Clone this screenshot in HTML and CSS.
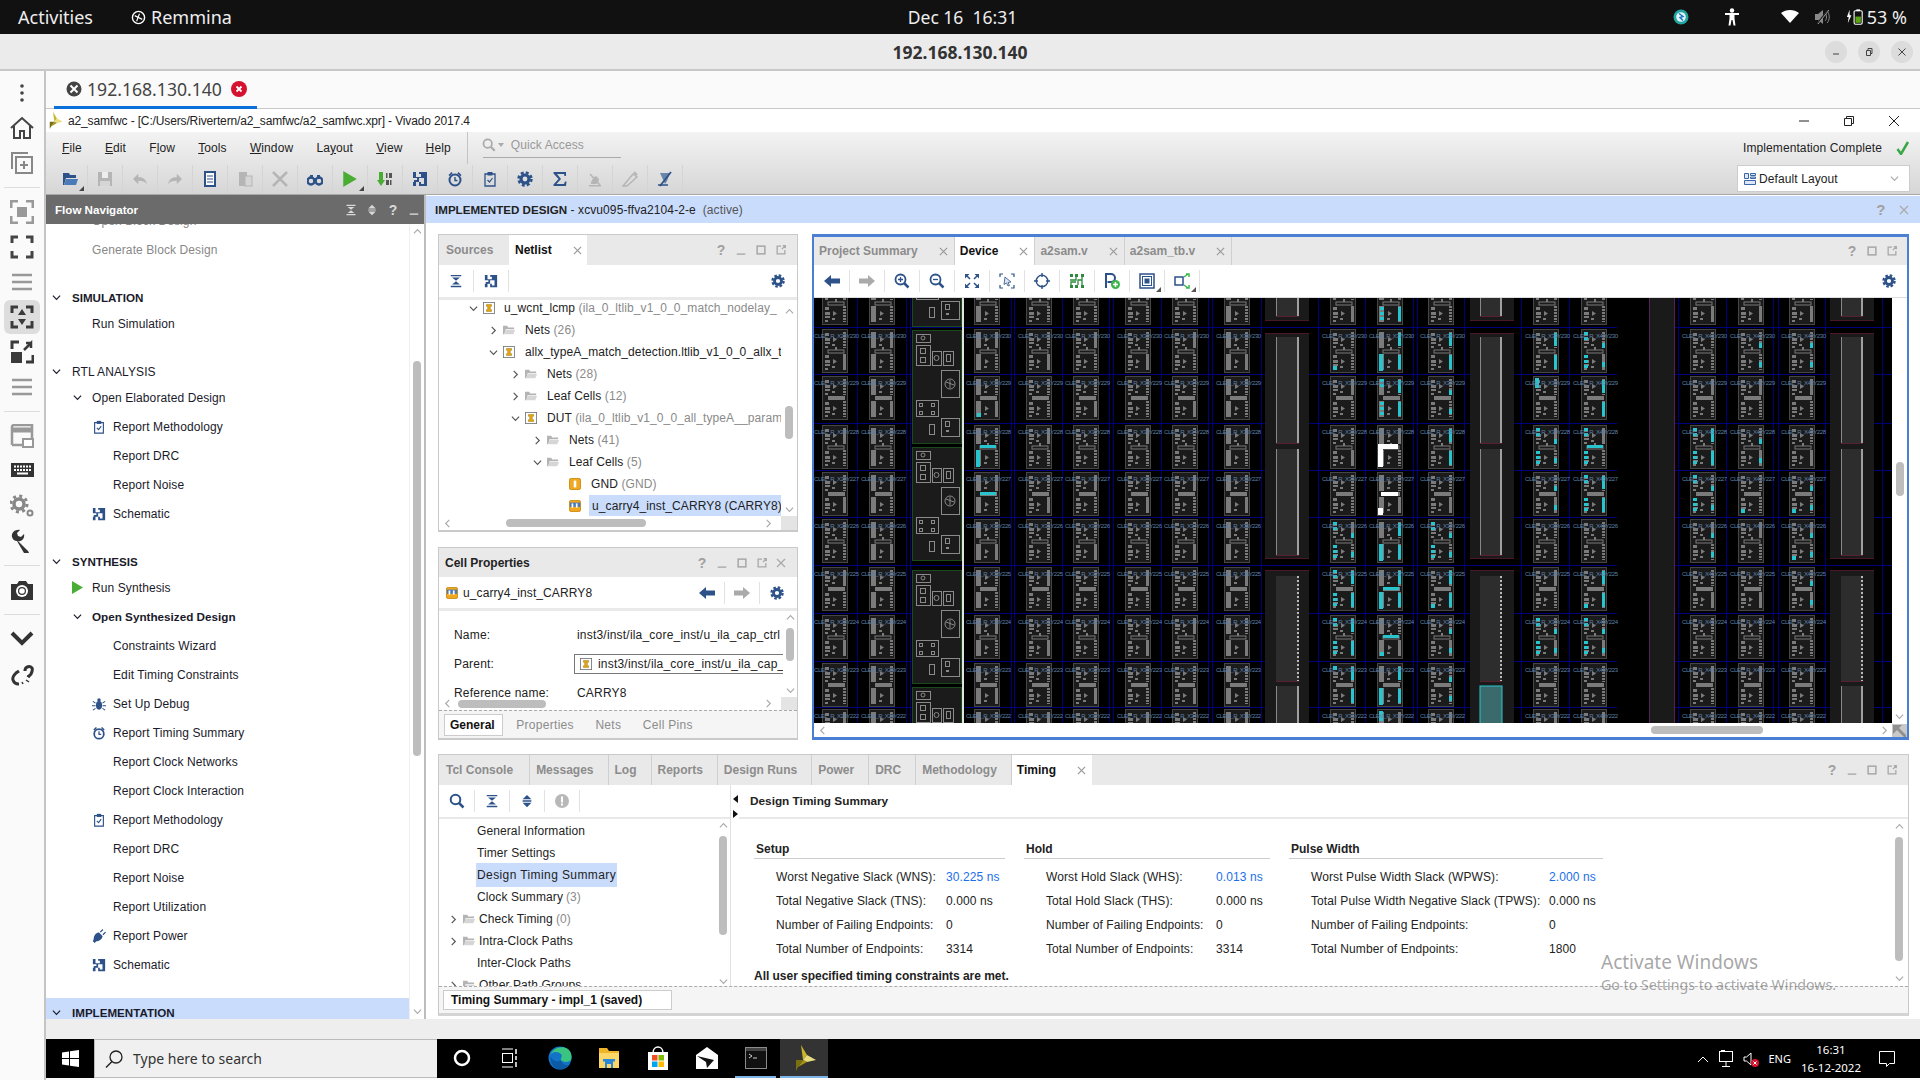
FILE: index.html
```html
<!DOCTYPE html>
<html lang="en">
<head>
<meta charset="utf-8">
<title>192.168.130.140 - Vivado</title>
<link rel="stylesheet" href="styles.css">
</head>
<body>
<svg class="sprite" aria-hidden="true">
  <defs>
    <symbol id="chev-d" viewBox="0 0 10 10"><path d="M1 3l4 4 4-4" fill="none" stroke="currentColor" stroke-width="1.3"/></symbol>
    <symbol id="chev-r" viewBox="0 0 10 10"><path d="M3 1l4 4-4 4" fill="none" stroke="currentColor" stroke-width="1.3"/></symbol>
    <symbol id="chev-u" viewBox="0 0 10 10"><path d="M1 7l4-4 4 4" fill="none" stroke="currentColor" stroke-width="1.3"/></symbol>
    <symbol id="chev-l" viewBox="0 0 10 10"><path d="M7 1L3 5l4 4" fill="none" stroke="currentColor" stroke-width="1.3"/></symbol>
    <symbol id="x" viewBox="0 0 10 10"><path d="M1 1l8 8M9 1l-8 8" fill="none" stroke="currentColor" stroke-width="1.3"/></symbol>
    <symbol id="min" viewBox="0 0 14 14"><rect x="2" y="11" width="10" height="1.6" fill="currentColor"/></symbol>
    <symbol id="max" viewBox="0 0 14 14"><rect x="2.5" y="2.5" width="9" height="9" fill="none" stroke="currentColor" stroke-width="1.8"/></symbol>
    <symbol id="float" viewBox="0 0 14 14"><path d="M7 2.5H2.5v9h9V7M8 6l4-4M9 2h3v3" fill="none" stroke="currentColor" stroke-width="1.5"/></symbol>
    <symbol id="collapse" viewBox="0 0 16 16"><path d="M2 1h12v1.6H2zM2 13.4h12V15H2zM3.5 4h9L8 7.6zM3.5 12h9L8 8.4z" fill="currentColor"/></symbol>
    <symbol id="updown" viewBox="0 0 16 16"><path d="M8 1l5 5H3zM8 15l-5-5h10zM3 7.2h10v1.6H3z" fill="currentColor"/></symbol>
    <symbol id="schem" viewBox="0 0 16 16"><path d="M1 1h3v5h5V3h-2V1h8v14H7v-4h2v2h3V7H7v4H4v4H1v-4h1V9h3V7H1z" fill="currentColor"/></symbol>
    <symbol id="gear" viewBox="0 0 16 16"><circle cx="8" cy="8" r="4" fill="none" stroke="currentColor" stroke-width="3.2"/><circle cx="8" cy="8" r="6.4" fill="none" stroke="currentColor" stroke-width="2.6" stroke-dasharray="2.9 2.13"/></symbol>
    <symbol id="arrow-l" viewBox="0 0 16 12"><path d="M7 0v3.5h9v5H7V12L0 6z" fill="currentColor"/></symbol>
    <symbol id="arrow-r" viewBox="0 0 16 12"><path d="M9 0v3.5H0v5h9V12l7-6z" fill="currentColor"/></symbol>
    <symbol id="folder" viewBox="0 0 14 12"><path d="M0 1h5l1 2h7v2H3L1.500 11H0z" fill="#b4b4b4"/><path d="M3 6h11l-2 5H1.500z" fill="#d6d6d6"/></symbol>
    <symbol id="cell" viewBox="0 0 14 14"><rect x=".5" y=".5" width="13" height="13" fill="#fff" stroke="#777"/><path d="M4 3h6v2H8.500v4H10v2H4V9h1.500V5H4z" fill="#e8a90c" stroke="#8a6400" stroke-width=".5"/></symbol>
    <symbol id="leaf" viewBox="0 0 14 14"><rect x=".5" y=".5" width="13" height="13" rx="2" fill="#f0a820" stroke="#c98400"/><rect x="5.500" y="3" width="3" height="8" fill="#fff"/></symbol>
    <symbol id="leaf2" viewBox="0 0 14 14"><rect x=".5" y=".5" width="13" height="13" rx="2" fill="#f0a820" stroke="#c98400"/><rect x="1" y="3" width="12" height="5" fill="#4a78b8"/><rect x="3" y="4" width="2" height="5" fill="#fff"/><rect x="8" y="4" width="2" height="5" fill="#fff"/></symbol>
    <symbol id="clip" viewBox="0 0 16 16"><path d="M3 3h10v12H3z" fill="none" stroke="currentColor" stroke-width="1.300"/><rect x="5.500" y="1" width="5" height="3.500" fill="currentColor"/><path d="M5.500 9l2 2 3-4" fill="none" stroke="currentColor" stroke-width="1.200"/></symbol>
    <symbol id="clock" viewBox="0 0 16 16"><circle cx="8" cy="9" r="5.500" fill="none" stroke="currentColor" stroke-width="2"/><path d="M8 6v3.500h2.500" fill="none" stroke="currentColor" stroke-width="1.400"/><path d="M1.500 4l3-3 1.200 1.200-3 3zM14.500 4l-3-3-1.200 1.200 3 3z" fill="currentColor"/></symbol>
    <symbol id="bug" viewBox="0 0 16 16"><ellipse cx="8" cy="9.500" rx="3.500" ry="5" fill="currentColor"/><circle cx="8" cy="3.500" r="2" fill="currentColor"/><path d="M1 5l3 2M15 5l-3 2M0 10h4M16 10h-4M1 15l3-2M15 15l-3-2" stroke="currentColor" stroke-width="1.200"/></symbol>
    <symbol id="plug" viewBox="0 0 16 16"><path d="M2 11c0-4 3-7 6-7l4 4c0 3-3 6-7 6l-2 2-2-2z" fill="currentColor"/><path d="M9 3l3-3 1 1-3 3zM12 6l3-3 1 1-3 3z" fill="currentColor"/></symbol>
    <symbol id="play" viewBox="0 0 12 14"><path d="M0 0l12 7-12 7z" fill="#4aad33"/></symbol>
    <symbol id="search" viewBox="0 0 16 16"><circle cx="6.500" cy="6.500" r="4.800" fill="none" stroke="currentColor" stroke-width="2"/><path d="M10 10l4.500 4.500" stroke="currentColor" stroke-width="2.500"/></symbol>
    <symbol id="vivado" viewBox="0 0 24 26"><path d="M9 0l6 10-4 5z" fill="#c9b62c"/><path d="M15 10l9 5-9 2-4-2z" fill="#e8de80"/><path d="M11 15l4 2-9 5z" fill="#a39413"/><path d="M11 15L6 22l-2 4V15z" fill="#7a7010"/></symbol>
  </defs>
</svg>

<header class="topbar">
  <div class="top-left">
    <span>Activities</span>
    <span class="rem"><svg class="i15" viewBox="0 0 16 16"><circle cx="8" cy="8" r="6.500" fill="none" stroke="#fff" stroke-width="1.500"/><path d="M4 6l8 4M9 4l-3 8" stroke="#fff" stroke-width="1.200"/></svg>Remmina</span>
  </div>
  <div class="top-clock">Dec 16&nbsp; 16:31</div>
  <div class="top-right">
    <svg class="i16 t-s" viewBox="0 0 16 16"><circle cx="8" cy="8" r="7.500" fill="#22a5a0"/><circle cx="8" cy="8" r="4.800" fill="#e8f4fa"/><path d="M6 4.500l4 3-3 1 3 3" fill="none" stroke="#1a78c8" stroke-width="1.500"/></svg>
    <svg class="i18 t-a" viewBox="0 0 18 18"><circle cx="9" cy="2.500" r="2.200" fill="#fff"/><path d="M2 5h14v2h-4.500v3.500l1 7h-2L9.500 12h-1l-1 5.500h-2l1-7V7H2z" fill="#fff"/></svg>
    <svg class="i18 t-w" viewBox="0 0 18 18"><path d="M9 15L0 5c5-4 13-4 18 0z" fill="#fff"/></svg>
    <svg class="i18 t-m" viewBox="0 0 18 18"><path d="M1 6h3l5-4v14l-5-4H1z" fill="#888"/><path d="M11 5c2 2 2 6 0 8M13 3c3 3 3 9 0 12" fill="none" stroke="#888"/><path d="M3 16L14 2" stroke="#222" stroke-width="1.500"/><path d="M4 16L15 2" stroke="#999"/></svg>
    <svg class="i18 t-b" viewBox="0 0 20 18"><path d="M4 1L1 9h2l-1 7 4-9H4z" fill="#fff"/><rect x="9" y="2" width="9" height="15" rx="1.500" fill="none" stroke="#fff" stroke-width="1.200"/><rect x="11.500" y=".5" width="4" height="2" fill="#fff"/><rect x="10.500" y="8.500" width="6" height="7" fill="#5aa510"/></svg>
    <span>53 %</span>
  </div>
</header>

<div class="titlebar">
  <span class="tb-title">192.168.130.140</span>
  <div class="tb-btns">
    <span class="wbtn"><svg class="i10" viewBox="0 0 10 10"><path d="M2 7h6" stroke="#444"/></svg></span>
    <span class="wbtn"><svg class="i10" viewBox="0 0 10 10"><path d="M2.500 3.500h4v5h-4zM4 3.500V1.500h4v5H6.500" fill="none" stroke="#444"/></svg></span>
    <span class="wbtn"><svg class="i10" viewBox="0 0 10 10"><path d="M1.500 1.500l7 7M8.500 1.500l-7 7" stroke="#444"/></svg></span>
  </div>
</div>

<div class="shell">
  <aside class="dock">
    <svg class="dk" viewBox="0 0 24 24"><circle cx="12" cy="5" r="1.800" fill="#444"/><circle cx="12" cy="12" r="1.800" fill="#444"/><circle cx="12" cy="19" r="1.800" fill="#444"/></svg>
    <svg class="dk" viewBox="0 0 24 24"><path d="M1 12L12 2l11 10M4 10v12h6v-7h4v7h6V10" fill="none" stroke="#444" stroke-width="2"/></svg>
    <svg class="dk" viewBox="0 0 24 24"><path d="M2 18V2h16" fill="none" stroke="#888" stroke-width="2"/><rect x="6" y="6" width="16" height="16" fill="none" stroke="#888" stroke-width="2"/><path d="M14 10v8M10 14h8" stroke="#888" stroke-width="2"/></svg>
    <div class="dk-sep"></div>
    <svg class="dk" viewBox="0 0 24 24"><path d="M8 1H1v7M16 1h7v7M8 23H1v-7M16 23h7v-7" fill="none" stroke="#999" stroke-width="3"/><rect x="7" y="7" width="10" height="10" fill="#999"/></svg>
    <svg class="dk" viewBox="0 0 24 24"><path d="M8 2H2v6M16 2h6v6M8 22H2v-6M16 22h6v-6" fill="none" stroke="#444" stroke-width="3"/></svg>
    <svg class="dk" viewBox="0 0 24 24"><path d="M2 5h20M2 12h20M2 19h20" stroke="#999" stroke-width="2.500"/></svg>
    <span class="dk-on"><svg class="dk" viewBox="0 0 24 24"><path d="M8 2H2v6M16 2h6v6M8 22H2v-6M16 22h6v-6" fill="none" stroke="#3a3a3a" stroke-width="3"/><path d="M12 4l4 6H8zM12 20l-4-6h8z" fill="#3a3a3a"/></svg></span>
    <svg class="dk" viewBox="0 0 24 24"><path d="M2 9V2h7M16 22h7v-7" fill="none" stroke="#3a3a3a" stroke-width="3"/><rect x="1" y="12" width="11" height="11" fill="#3a3a3a"/><path d="M14 10l7-7v5M21 3h-5" fill="none" stroke="#3a3a3a" stroke-width="2.500"/></svg>
    <svg class="dk" viewBox="0 0 24 24"><path d="M2 5h20M2 12h20M2 19h20" stroke="#999" stroke-width="2.500"/></svg>
    <div class="dk-sep"></div>
    <svg class="dk" viewBox="0 0 24 24"><path d="M2 21V3c0-1 1-2 2-2h18v14" fill="none" stroke="#999" stroke-width="2.500"/><path d="M2 6h20" stroke="#999" stroke-width="5"/><rect x="13" y="15" width="10" height="8" fill="#fff" stroke="#999" stroke-width="2"/><path d="M2 21h10" stroke="#999" stroke-width="2.500"/></svg>
    <svg class="dk" viewBox="0 0 24 24"><rect x="1" y="4" width="23" height="14" fill="#333"/><path d="M4 7.500h17M4 11h17" stroke="#fff" stroke-width="2" stroke-dasharray="2 1"/><path d="M7 14.500h11" stroke="#fff" stroke-width="2"/></svg>
    <svg class="dk" viewBox="0 0 24 24"><circle cx="9" cy="10" r="5" fill="none" stroke="#888" stroke-width="3.500"/><circle cx="9" cy="10" r="8" fill="none" stroke="#888" stroke-width="3" stroke-dasharray="3 3.280"/><circle cx="20" cy="19" r="2.500" fill="none" stroke="#888" stroke-width="2"/></svg>
    <svg class="dk" viewBox="0 0 24 24"><path d="M2 8c-1-4 3-8 8-7L7 4l1 3 3 1 3-3c1 4-2 8-6 7l9 9c1 1 3 3 1 4s-3 0-4-1L7 12C5 12 3 11 2 8z" fill="#333"/></svg>
    <div class="dk-sep"></div>
    <svg class="dk" viewBox="0 0 24 24"><path d="M1 6h6l2-3h7l2 3h5v16H1z" fill="#333"/><circle cx="12" cy="13" r="6" fill="#fff"/><circle cx="12" cy="13" r="4" fill="#333"/><circle cx="12" cy="13" r="2.800" fill="#fff"/></svg>
    <div class="dk-sep"></div>
    <svg class="dk" viewBox="0 0 24 24"><path d="M2 6l10 10L22 6" fill="none" stroke="#333" stroke-width="4"/></svg>
    <svg class="dk" viewBox="0 0 24 24"><path d="M9 22a6 6 0 0 1-6-4c-1-3 1-5 3-7l3-2M15 9V8a4 4 0 0 1 7-2c1 2 0 4-1 6l-3 3" fill="none" stroke="#333" stroke-width="3"/><path d="M12 20l1 2M16 18l3 2M17 14l3 1" stroke="#333" stroke-width="1.500"/></svg>
  </aside>

  <div class="stage">
    <div class="rtabs">
      <div class="rtab">
        <svg class="i14 rt-ic" viewBox="0 0 16 16"><circle cx="8" cy="8" r="7.500" fill="#444"/><path d="M4.500 4.500l7 7M11.500 4.500l-7 7" stroke="#fff" stroke-width="2"/></svg>
        <span>192.168.130.140</span>
        <svg class="i16 rt-x" viewBox="0 0 16 16"><circle cx="8" cy="8" r="8" fill="#d5122f"/><path d="M5.500 5.500l5 5M10.500 5.500l-5 5" stroke="#fff" stroke-width="1.800"/></svg>
      </div>
    </div>

    <div class="vtitle">
      <svg class="vlogo" viewBox="0 0 24 26"><use href="#vivado"/></svg>
      <span class="vtitle-t">a2_samfwc - [C:/Users/Rivertern/a2_samfwc/a2_samfwc.xpr] - Vivado 2017.4</span>
      <div class="vtitle-btns">
        <svg class="i12" viewBox="0 0 12 12"><path d="M1 6h10" stroke="#222"/></svg>
        <svg class="i12" viewBox="0 0 12 12"><path d="M1.500 3.500h7v7h-7zM3.500 3.500v-2h7v7h-2" fill="none" stroke="#222"/></svg>
        <svg class="i12" viewBox="0 0 12 12"><path d="M1 1l10 10M11 1L1 11" stroke="#222"/></svg>
      </div>
    </div>

    <div class="menubar">
      <div class="menu-left">
        <div class="menu-row">
          <nav class="menu-items">
            <span><u>F</u>ile</span><span><u>E</u>dit</span><span>F<u>l</u>ow</span><span><u>T</u>ools</span><span><u>W</u>indow</span><span>La<u>y</u>out</span><span><u>V</u>iew</span><span><u>H</u>elp</span>
          </nav>
          <div class="quick">
            <svg class="i14" viewBox="0 0 16 16"><use href="#search"/></svg><span class="qa-caret"></span><span>Quick Access</span>
          </div>
        </div>
        <div class="tools">
          <span class="tb drop"><svg class="i16 blue" viewBox="0 0 16 16"><path d="M1 2h6l1 2h6v3H4L2 14H1z" fill="#2d5289"/><path d="M4 8h12l-2 6H2z" fill="#4a7ab8"/></svg></span>
          <span class="tb"><svg class="i16" viewBox="0 0 16 16"><path d="M1 1h14v14H1z" fill="#b5b5b5"/><rect x="5" y="1" width="6" height="6" fill="#eee"/><rect x="3" y="10" width="10" height="5" fill="#d5d5d5"/></svg></span>
          <span class="tb"><svg class="i14" viewBox="0 0 16 12"><path d="M6 0v4c5 0 9 2 10 8-2-3-5-4-10-4v4L0 6z" fill="#b5b5b5"/></svg></span>
          <span class="tb"><svg class="i14" viewBox="0 0 16 12"><path d="M10 0v4C5 4 1 6 0 12c2-3 5-4 10-4v4l6-6z" fill="#b5b5b5"/></svg></span>
          <span class="tb"><svg class="i16" viewBox="0 0 16 16"><path d="M3 1h10v14H3z" fill="#fff" stroke="#2d5289" stroke-width="2"/><path d="M5 5h6M5 8h6M5 11h6" stroke="#2d5289" stroke-width="1.200"/></svg></span>
          <span class="tb"><svg class="i16" viewBox="0 0 16 16"><rect x="2" y="1" width="8" height="14" fill="#b5b5b5"/><rect x="8" y="5" width="7" height="10" fill="#d5d5d5" stroke="#b5b5b5"/></svg></span>
          <span class="tb"><svg class="i16" viewBox="0 0 16 16"><path d="M1 1l14 14M15 1L1 15" stroke="#b5b5b5" stroke-width="2.500"/></svg></span>
          <span class="tb"><svg class="i16" viewBox="0 0 16 16"><circle cx="4" cy="10" r="3.500" fill="none" stroke="#2d5289" stroke-width="2.500"/><circle cx="12" cy="10" r="3.500" fill="none" stroke="#2d5289" stroke-width="2.500"/><path d="M3 4h3v4H3zM10 4h3v4h-3zM6 7h4v3H6z" fill="#2d5289"/></svg></span>
          <span class="tb drop"><svg class="i16" viewBox="0 0 12 14"><use href="#play"/></svg></span>
          <span class="tb"><svg class="i16" viewBox="0 0 16 16"><path d="M2 1h4v8h2l-4 6-4-6h2z" fill="#4aad33"/><path d="M9 2h1.500v5H9zM12 2h3v5h-3zM9 9h3v5H9zM13 9h1.500v5H13z" fill="#555"/></svg></span>
          <span class="tb"><svg class="i16 blue" viewBox="0 0 16 16"><use href="#schem"/></svg></span>
          <span class="tb"><svg class="i16 blue" viewBox="0 0 16 16"><use href="#clock"/></svg></span>
          <span class="tb"><svg class="i16 blue" viewBox="0 0 16 16"><use href="#clip"/></svg></span>
          <span class="tb"><svg class="i16 blue" viewBox="0 0 16 16"><use href="#gear"/></svg></span>
          <span class="tb"><svg class="i16 blue" viewBox="0 0 16 16"><path d="M1.500 1h12.500v4h-1.500l-.5-2H5l4 5-4.500 5H12l1-2.500h1.500L14 15H1.500v-1.500L6.500 8 1.500 2.500z" fill="currentColor"/></svg></span>
          <span class="tb"><svg class="i16" viewBox="0 0 16 16"><path d="M2 14h12v1.500H2zM4 13c0-4 3-7 5-8l3 3c0 3-2 5-3 5z" fill="#b5b5b5"/><path d="M3 3l10 11" stroke="#b5b5b5" stroke-width="1.500"/></svg></span>
          <span class="tb"><svg class="i16" viewBox="0 0 16 16"><path d="M1 15L11 3l4 3L5 15z" fill="none" stroke="#b5b5b5" stroke-width="1.500"/><path d="M12 1l3 3" stroke="#b5b5b5" stroke-width="2"/></svg></span>
          <span class="tb"><svg class="i16" viewBox="0 0 16 16"><path d="M3 2l5 11 2-3 3-8" fill="#6a85aa"/><path d="M14 1L3 15" stroke="#2d5289" stroke-width="1.800"/><path d="M1 14h10" stroke="#2d5289" stroke-width="1.500"/></svg></span>
        </div>
      </div>
      <div class="menu-right">
        <div class="status"><span>Implementation Complete</span><svg class="i14" viewBox="0 0 14 14"><path d="M1.500 8l3.500 5 7-12" fill="none" stroke="#3aa845" stroke-width="2.500"/></svg></div>
        <div class="layout-sel">
          <svg class="i12" viewBox="0 0 12 12"><path d="M.5.500h4v5h-4zM6.500.500h5v2h-5zM6.500 4h5v1.500h-5zM.5 7.500h11v4H.500z" fill="#dde7f5" stroke="#3a66a8"/></svg>
          <span class="ls-t">Default Layout</span>
          <svg class="i9 grey" viewBox="0 0 10 10"><use href="#chev-d"/></svg>
        </div>
      </div>
    </div>

    <div class="workspace">
      <section class="flow">
        <div class="flow-head">
          <span>Flow Navigator</span>
          <div class="flow-btns">
            <svg class="i12" viewBox="0 0 16 16"><use href="#collapse"/></svg>
            <svg class="i12" viewBox="0 0 16 16"><use href="#updown"/></svg>
            <span class="q">?</span>
            <svg class="i12" viewBox="0 0 14 14"><use href="#min"/></svg>
          </div>
        </div>
        <div class="flow-body">
          <div class="flow-list">
            <div class="fi lv1 dim">Open Block Design</div>
            <div class="fi lv1 dim">Generate Block Design</div>
            <div class="fh"><svg class="i9" viewBox="0 0 10 10"><use href="#chev-d"/></svg><b>SIMULATION</b></div>
            <div class="fi lv1">Run Simulation</div>
            <div class="fh"><svg class="i9" viewBox="0 0 10 10"><use href="#chev-d"/></svg><span class="reg">RTL ANALYSIS</span></div>
            <div class="fi lv1 tw"><svg class="i9" viewBox="0 0 10 10"><use href="#chev-d"/></svg>Open Elaborated Design</div>
            <div class="fi lv2"><svg class="i14 blue" viewBox="0 0 16 16"><use href="#clip"/></svg>Report Methodology</div>
            <div class="fi lv2">Report DRC</div>
            <div class="fi lv2">Report Noise</div>
            <div class="fi lv2"><svg class="i14 blue" viewBox="0 0 16 16"><use href="#schem"/></svg>Schematic</div>
            <div class="fh"><svg class="i9" viewBox="0 0 10 10"><use href="#chev-d"/></svg><b>SYNTHESIS</b></div>
            <div class="fi lv1 run"><svg class="i12" viewBox="0 0 12 14"><use href="#play"/></svg>Run Synthesis</div>
            <div class="fi lv1 tw"><svg class="i9" viewBox="0 0 10 10"><use href="#chev-d"/></svg><b>Open Synthesized Design</b></div>
            <div class="fi lv2">Constraints Wizard</div>
            <div class="fi lv2">Edit Timing Constraints</div>
            <div class="fi lv2"><svg class="i14 blue" viewBox="0 0 16 16"><use href="#bug"/></svg>Set Up Debug</div>
            <div class="fi lv2"><svg class="i14 blue" viewBox="0 0 16 16"><use href="#clock"/></svg>Report Timing Summary</div>
            <div class="fi lv2">Report Clock Networks</div>
            <div class="fi lv2">Report Clock Interaction</div>
            <div class="fi lv2"><svg class="i14 blue" viewBox="0 0 16 16"><use href="#clip"/></svg>Report Methodology</div>
            <div class="fi lv2">Report DRC</div>
            <div class="fi lv2">Report Noise</div>
            <div class="fi lv2">Report Utilization</div>
            <div class="fi lv2"><svg class="i14 blue" viewBox="0 0 16 16"><use href="#plug"/></svg>Report Power</div>
            <div class="fi lv2"><svg class="i14 blue" viewBox="0 0 16 16"><use href="#schem"/></svg>Schematic</div>
            <div class="fh active"><svg class="i9" viewBox="0 0 10 10"><use href="#chev-d"/></svg><b>IMPLEMENTATION</b></div>
          </div>
          <div class="vs vs-flow"><svg class="i9 grey" viewBox="0 0 10 10"><use href="#chev-u"/></svg><span class="thumb"></span><svg class="i9 grey" viewBox="0 0 10 10"><use href="#chev-d"/></svg></div>
        </div>
      </section>

      <section class="design">
        <div class="design-head">
          <span class="dh-t"><b>IMPLEMENTED DESIGN</b> - xcvu095-ffva2104-2-e&nbsp; <span class="muted">(active)</span></span>
          <div class="dh-b"><span class="q">?</span><svg class="i10 grey" viewBox="0 0 10 10"><use href="#x"/></svg></div>
        </div>
        <div class="panes">
          <div class="upper">
            <div class="left-stack">
              <div class="panel sources">
                <div class="tabs">
                  <span class="tab first">Sources</span>
                  <span class="tab on nl">Netlist<svg class="cl" viewBox="0 0 10 10"><use href="#x"/></svg></span>
                  <div class="tab-btns"><span class="q">?</span><svg class="i12" viewBox="0 0 14 14"><use href="#min"/></svg><svg class="i12" viewBox="0 0 14 14"><use href="#max"/></svg><svg class="i12" viewBox="0 0 14 14"><use href="#float"/></svg></div>
                </div>
                <div class="bar">
                  <span class="bi"><svg class="i14 blue" viewBox="0 0 16 16"><use href="#collapse"/></svg></span>
                  <span class="bi"><svg class="i14 blue" viewBox="0 0 16 16"><use href="#schem"/></svg></span>
                  <span class="grow"></span>
                  <span class="gear-end"><svg class="i14 blue" viewBox="0 0 16 16"><use href="#gear"/></svg></span>
                </div>
                <div class="scrollbox tree-box">
                  <div class="tree netlist">
                    <div class="tr d1"><svg class="i9 tw2" viewBox="0 0 10 10"><use href="#chev-d"/></svg><svg class="i12 ti" viewBox="0 0 14 14"><use href="#cell"/></svg><span class="nw">u_wcnt_lcmp <em>(ila_0_ltlib_v1_0_0_match_nodelay_</em></span></div>
                    <div class="tr d2"><svg class="i9 tw2" viewBox="0 0 10 10"><use href="#chev-r"/></svg><svg class="i12 ti" viewBox="0 0 14 12"><use href="#folder"/></svg><span class="nw">Nets <em>(26)</em></span></div>
                    <div class="tr d2"><svg class="i9 tw2" viewBox="0 0 10 10"><use href="#chev-d"/></svg><svg class="i12 ti" viewBox="0 0 14 14"><use href="#cell"/></svg><span class="nw">allx_typeA_match_detection.ltlib_v1_0_0_allx_t</span></div>
                    <div class="tr d3"><svg class="i9 tw2" viewBox="0 0 10 10"><use href="#chev-r"/></svg><svg class="i12 ti" viewBox="0 0 14 12"><use href="#folder"/></svg><span class="nw">Nets <em>(28)</em></span></div>
                    <div class="tr d3"><svg class="i9 tw2" viewBox="0 0 10 10"><use href="#chev-r"/></svg><svg class="i12 ti" viewBox="0 0 14 12"><use href="#folder"/></svg><span class="nw">Leaf Cells <em>(12)</em></span></div>
                    <div class="tr d3"><svg class="i9 tw2" viewBox="0 0 10 10"><use href="#chev-d"/></svg><svg class="i12 ti" viewBox="0 0 14 14"><use href="#cell"/></svg><span class="nw">DUT <em>(ila_0_ltlib_v1_0_0_all_typeA__param</em></span></div>
                    <div class="tr d4"><svg class="i9 tw2" viewBox="0 0 10 10"><use href="#chev-r"/></svg><svg class="i12 ti" viewBox="0 0 14 12"><use href="#folder"/></svg><span class="nw">Nets <em>(41)</em></span></div>
                    <div class="tr d4"><svg class="i9 tw2" viewBox="0 0 10 10"><use href="#chev-d"/></svg><svg class="i12 ti" viewBox="0 0 14 12"><use href="#folder"/></svg><span class="nw">Leaf Cells <em>(5)</em></span></div>
                    <div class="tr d5"><span class="tw-e"></span><svg class="i12 ti" viewBox="0 0 14 14"><use href="#leaf"/></svg><span class="nw">GND <em>(GND)</em></span></div>
                    <div class="tr d5"><span class="tw-e"></span><svg class="i12 ti" viewBox="0 0 14 14"><use href="#leaf2"/></svg><span class="nw sel">u_carry4_inst_CARRY8 (CARRY8)</span></div>
                  </div>
                  <div class="vs vs-tree"><svg class="i9 grey" viewBox="0 0 10 10"><use href="#chev-u"/></svg><span class="thumb"></span><svg class="i9 grey" viewBox="0 0 10 10"><use href="#chev-d"/></svg></div>
                </div>
                <div class="hs hs-tree"><svg class="i9 grey" viewBox="0 0 10 10"><use href="#chev-l"/></svg><span class="hthumb"></span><svg class="i9 grey" viewBox="0 0 10 10"><use href="#chev-r"/></svg><span class="corner"></span></div>
              </div>

              <div class="panel cellprops">
                <div class="phead">
                  <b>Cell Properties</b>
                  <div class="tab-btns"><span class="q">?</span><svg class="i12" viewBox="0 0 14 14"><use href="#min"/></svg><svg class="i12" viewBox="0 0 14 14"><use href="#max"/></svg><svg class="i12" viewBox="0 0 14 14"><use href="#float"/></svg><svg class="i10 grey" viewBox="0 0 10 10"><use href="#x"/></svg></div>
                </div>
                <div class="bar cp-bar">
                  <svg class="i12" viewBox="0 0 14 14"><use href="#leaf2"/></svg>
                  <span class="cp-name">u_carry4_inst_CARRY8</span>
                  <span class="grow"></span>
                  <span class="ai"><svg class="a14 blue" viewBox="0 0 16 12"><use href="#arrow-l"/></svg></span>
                  <span class="ai sepl"><svg class="a14 grey" viewBox="0 0 16 12"><use href="#arrow-r"/></svg></span>
                  <span class="ai sepl"><svg class="i14 blue" viewBox="0 0 16 16"><use href="#gear"/></svg></span>
                </div>
                <div class="scrollbox cp-box">
                  <div class="cp-grid">
                    <span>Name:</span><span class="nw">inst3/inst/ila_core_inst/u_ila_cap_ctrl</span>
                    <span>Parent:</span><span class="cp-input"><svg class="i12" viewBox="0 0 14 14"><use href="#cell"/></svg><span class="nw">inst3/inst/ila_core_inst/u_ila_cap_</span></span>
                    <span>Reference name:</span><span class="nw">CARRY8</span>
                  </div>
                  <div class="vs vs-cp"><svg class="i9 grey" viewBox="0 0 10 10"><use href="#chev-u"/></svg><span class="thumb"></span><svg class="i9 grey" viewBox="0 0 10 10"><use href="#chev-d"/></svg></div>
                </div>
                <div class="hs hs-cp"><svg class="i9 grey" viewBox="0 0 10 10"><use href="#chev-l"/></svg><span class="hthumb"></span><svg class="i9 grey" viewBox="0 0 10 10"><use href="#chev-r"/></svg><span class="corner"></span></div>
                <div class="cp-tabs"><b class="cp-on">General</b><span>Properties</span><span>Nets</span><span>Cell Pins</span></div>
              </div>
            </div>

            <div class="device">
              <div class="tabs dev-tabs">
                <span class="tab dv">Project Summary<svg class="cl" viewBox="0 0 10 10"><use href="#x"/></svg></span>
                <span class="tab dv on">Device<svg class="cl" viewBox="0 0 10 10"><use href="#x"/></svg></span>
                <span class="tab dv">a2sam.v<svg class="cl" viewBox="0 0 10 10"><use href="#x"/></svg></span>
                <span class="tab dv">a2sam_tb.v<svg class="cl" viewBox="0 0 10 10"><use href="#x"/></svg></span>
                <div class="tab-btns dev-btns"><span class="q">?</span><svg class="i12" viewBox="0 0 14 14"><use href="#max"/></svg><svg class="i12" viewBox="0 0 14 14"><use href="#float"/></svg></div>
              </div>
              <div class="bar dev-bar">
                <span class="di"><svg class="a14 blue" viewBox="0 0 16 12"><use href="#arrow-l"/></svg></span>
                <span class="di"><svg class="a14 grey" viewBox="0 0 16 12"><use href="#arrow-r"/></svg></span>
                <span class="di"><svg class="i16" viewBox="0 0 16 16"><circle cx="6.500" cy="6.500" r="5" fill="none" stroke="#2d5289" stroke-width="1.800"/><path d="M10 10l4.500 4.500" stroke="#2d5289" stroke-width="2.500"/><path d="M4 6.500h5M6.500 4v5" stroke="#2d5289" stroke-width="1.300"/></svg></span>
                <span class="di"><svg class="i16" viewBox="0 0 16 16"><circle cx="6.500" cy="6.500" r="5" fill="none" stroke="#2d5289" stroke-width="1.800"/><path d="M10 10l4.500 4.500" stroke="#2d5289" stroke-width="2.500"/><path d="M4 6.500h5" stroke="#2d5289" stroke-width="1.300"/></svg></span>
                <span class="di"><svg class="i16" viewBox="0 0 16 16"><path d="M1 1h4.500L1 5.500zM15 1h-4.500L15 5.500zM1 15h4.500L1 10.500zM15 15h-4.500l4.500-4.500z" fill="#2d5289"/><path d="M3 3l3 3M13 3l-3 3M3 13l3-3M13 13l-3-3" stroke="#2d5289" stroke-width="1.500"/></svg></span>
                <span class="di"><svg class="i16" viewBox="0 0 16 16"><path d="M4 1H1v3M12 1h3v3M4 15H1v-3M12 15h3v-3" fill="none" stroke="#2d5289" stroke-width="1.200"/><path d="M6 4l6 5-3 .5 1.500 3-1.500.5-1.500-3L5 11.500z" fill="#dde5f0" stroke="#2d5289" stroke-width=".8"/></svg></span>
                <span class="di"><svg class="i16" viewBox="0 0 16 16"><circle cx="8" cy="8" r="5.800" fill="none" stroke="#2d5289" stroke-width="1.400"/><path d="M8 0v4M8 12v4M0 8h4M12 8h4" stroke="#2d5289" stroke-width="1.400"/></svg></span>
                <span class="di"><svg class="i16" viewBox="0 0 16 16"><path d="M1 1h3v3H1zM6 1h3v3H6zM12 1h3v3h-3zM1 12h3v3H1zM6 12h3v3H6zM12 12h3v3h-3z" fill="#2d8a3c"/><path d="M1 7h6V4M7 9H2v3M9 12V7h4M13 4v8" fill="none" stroke="#2d8a3c" stroke-width="1.300"/></svg></span>
                <span class="di"><svg class="i16" viewBox="0 0 16 16"><path d="M2 15V1h5a4 4 0 0 1 0 8H3.500" fill="none" stroke="#2d5289" stroke-width="2"/><circle cx="11.500" cy="11.500" r="4.500" fill="#3cb54a"/><path d="M11.500 9v5M9 11.500h5" stroke="#fff" stroke-width="1.500"/></svg></span>
                <span class="di drop2"><svg class="i16" viewBox="0 0 16 16"><rect x="1" y="1" width="14" height="14" fill="none" stroke="#2d5289" stroke-width="1.500"/><rect x="3.500" y="3.500" width="9" height="9" fill="none" stroke="#2d5289"/><rect x="5.500" y="5.500" width="5" height="5" fill="#2d5289"/></svg></span>
                <span class="di drop2"><svg class="i16" viewBox="0 0 16 16"><rect x="1" y="4" width="8" height="8" fill="none" stroke="#2d5289" stroke-width="1.500"/><path d="M10 4l4-3M10 12l4 3M12 1h3v3M12 15h3v-3" fill="none" stroke="#3cb54a" stroke-width="1.500"/></svg></span>
                <span class="grow"></span>
                <span class="gear-end dg"><svg class="i14 blue" viewBox="0 0 16 16"><use href="#gear"/></svg></span>
              </div>
              <div class="dev-mid">
                <div class="fabric" id="fabric"></div>
                <div class="vs vs-dev"><span class="vs-top"></span><span class="thumb"></span><svg class="i9 grey" viewBox="0 0 10 10"><use href="#chev-d"/></svg></div>
              </div>
              <div class="hs hs-dev"><svg class="i9 grey" viewBox="0 0 10 10"><use href="#chev-l"/></svg><span class="hthumb"></span><svg class="i9 grey" viewBox="0 0 10 10"><use href="#chev-r"/></svg>
                <svg class="corner-dev" viewBox="0 0 15 13"><rect width="15" height="13" fill="#c9c9c9"/><path d="M1 1h9L7 4l7 7v2h-2L5 6 1 10z" fill="#8f8f8f"/></svg>
              </div>
            </div>
          </div>

          <div class="panel timing">
            <div class="tabs tm-tabs">
              <span class="tab tm first">Tcl Console</span>
              <span class="tab tm">Messages</span>
              <span class="tab tm">Log</span>
              <span class="tab tm">Reports</span>
              <span class="tab tm">Design Runs</span>
              <span class="tab tm">Power</span>
              <span class="tab tm">DRC</span>
              <span class="tab tm">Methodology</span>
              <span class="tab on tm-on">Timing<svg class="cl" viewBox="0 0 10 10"><use href="#x"/></svg></span>
              <div class="tab-btns tm-btns"><span class="q">?</span><svg class="i12" viewBox="0 0 14 14"><use href="#min"/></svg><svg class="i12" viewBox="0 0 14 14"><use href="#max"/></svg><svg class="i12" viewBox="0 0 14 14"><use href="#float"/></svg></div>
            </div>
            <div class="tm-main">
              <div class="tm-left">
                <div class="bar tm-bar">
                  <span class="bi"><svg class="i16 blue" viewBox="0 0 16 16"><use href="#search"/></svg></span>
                  <span class="bi"><svg class="i14 blue" viewBox="0 0 16 16"><use href="#collapse"/></svg></span>
                  <span class="bi"><svg class="i14 blue" viewBox="0 0 16 16"><use href="#updown"/></svg></span>
                  <span class="bi"><svg class="i16" viewBox="0 0 16 16"><circle cx="8" cy="8" r="7" fill="#b8b8b8"/><rect x="7" y="3.500" width="2" height="6" fill="#fff"/><rect x="7" y="10.500" width="2" height="2" fill="#fff"/></svg></span>
                </div>
                <div class="scrollbox tm-tree-box">
                  <div class="tree tm-tree">
                    <div class="tr2">General Information</div>
                    <div class="tr2">Timer Settings</div>
                    <div class="tr2"><span class="sel2">Design Timing Summary</span></div>
                    <div class="tr2">Clock Summary <em>(3)</em></div>
                    <div class="tr2 ex"><svg class="i9 tw2" viewBox="0 0 10 10"><use href="#chev-r"/></svg><svg class="i12 ti2" viewBox="0 0 14 12"><use href="#folder"/></svg>Check Timing <em>(0)</em></div>
                    <div class="tr2 ex"><svg class="i9 tw2" viewBox="0 0 10 10"><use href="#chev-r"/></svg><svg class="i12 ti2" viewBox="0 0 14 12"><use href="#folder"/></svg>Intra-Clock Paths</div>
                    <div class="tr2">Inter-Clock Paths</div>
                    <div class="tr2 ex"><svg class="i9 tw2" viewBox="0 0 10 10"><use href="#chev-r"/></svg><svg class="i12 ti2" viewBox="0 0 14 12"><use href="#folder"/></svg>Other Path Groups</div>
                  </div>
                  <div class="vs vs-tm"><svg class="i9 grey" viewBox="0 0 10 10"><use href="#chev-u"/></svg><span class="thumb"></span><svg class="i9 grey" viewBox="0 0 10 10"><use href="#chev-d"/></svg></div>
                </div>
              </div>
              <div class="tm-split"><span class="tri-l"></span><span class="tri-r"></span></div>
              <div class="tm-right">
                <div class="tm-rhead"><b>Design Timing Summary</b></div>
                <div class="scrollbox tm-rbody">
                  <div class="summary">
                    <div class="sum-cols">
                      <div class="scol s1">
                        <h4>Setup</h4>
                        <div class="kv">
                          <span>Worst Negative Slack (WNS):</span><a>30.225 ns</a>
                          <span>Total Negative Slack (TNS):</span><span>0.000 ns</span>
                          <span>Number of Failing Endpoints:</span><span>0</span>
                          <span>Total Number of Endpoints:</span><span>3314</span>
                        </div>
                      </div>
                      <div class="scol s2">
                        <h4>Hold</h4>
                        <div class="kv">
                          <span>Worst Hold Slack (WHS):</span><a>0.013 ns</a>
                          <span>Total Hold Slack (THS):</span><span>0.000 ns</span>
                          <span>Number of Failing Endpoints:</span><span>0</span>
                          <span>Total Number of Endpoints:</span><span>3314</span>
                        </div>
                      </div>
                      <div class="scol s3">
                        <h4>Pulse Width</h4>
                        <div class="kv">
                          <span>Worst Pulse Width Slack (WPWS):</span><a>2.000 ns</a>
                          <span>Total Pulse Width Negative Slack (TPWS):</span><span>0.000 ns</span>
                          <span>Number of Failing Endpoints:</span><span>0</span>
                          <span>Total Number of Endpoints:</span><span>1800</span>
                        </div>
                      </div>
                    </div>
                    <p class="allmet">All user specified timing constraints are met.</p>
                  </div>
                  <div class="vs vs-tm2"><svg class="i9 grey" viewBox="0 0 10 10"><use href="#chev-u"/></svg><span class="thumb"></span><svg class="i9 grey" viewBox="0 0 10 10"><use href="#chev-d"/></svg></div>
                </div>
              </div>
            </div>
            <div class="tm-foot"><b class="foot-tab">Timing Summary - impl_1 (saved)</b></div>
          </div>
        </div>
      </section>
    </div>

    <div class="under"></div>

    <footer class="taskbar">
      <span class="start"><svg class="i16w" viewBox="0 0 17 17"><path d="M0 2.400l7-1V8H0zM8 1.200L17 0v8H8zM0 9h7v6.600l-7-1zM8 9h9v8l-9-1.300z" fill="#fff"/></svg></span>
      <div class="tsearch"><svg class="i20" viewBox="0 0 20 20"><circle cx="12" cy="8" r="6" fill="none" stroke="#222" stroke-width="1.300"/><path d="M8 12.500L2 18.500" stroke="#222" stroke-width="1.500"/></svg><span>Type here to search</span></div>
      <div class="tapps">
        <span class="tapp"><svg class="i20" viewBox="0 0 20 20"><circle cx="10" cy="10" r="7" fill="none" stroke="#fff" stroke-width="2.500"/></svg></span>
        <span class="tapp tview"><svg class="i20" viewBox="0 0 20 20"><path d="M3 1h11M3 19h11" stroke="#fff"/><rect x="3.500" y="5.500" width="10" height="9" fill="none" stroke="#fff"/><path d="M17 1v5M17 8v4M17 14v5" stroke="#fff" stroke-width="1.500"/></svg></span>
        <span class="tapp"><svg class="i24" viewBox="0 0 24 24"><circle cx="12" cy="12" r="11.500" fill="#1273c8"/><path d="M2 10C4 2 14-1 20 3c4 3 4 9 3 11-3 3-9 2-10 0-1-1 2-4 0-6-3-3-10-3-11 2z" fill="#39c481"/><path d="M13 14c0 3 4 6 8 5-3 4-10 6-15 2-3-3-4-8-3-10 2 4 6 6 10 3z" fill="#0c59a4"/></svg></span>
        <span class="tapp"><svg class="i24" viewBox="0 0 24 24"><path d="M2 2h8l2 3h10v17H2z" fill="#f0b429"/><path d="M2 7h20v15H2z" fill="#fcd667"/><path d="M8 22v-7h8v7h-2v-4h-4v4z" fill="#2b88d8"/><rect x="6" y="13" width="12" height="2.500" fill="#2b88d8"/></svg></span>
        <span class="tapp"><svg class="i24" viewBox="0 0 24 24"><path d="M2 6h20v18H2z" fill="#fff"/><path d="M7 7c0-8 10-8 10 0" fill="none" stroke="#fff" stroke-width="1.500"/><rect x="6" y="9" width="5.500" height="5.500" fill="#f25022"/><rect x="12.500" y="9" width="5.500" height="5.500" fill="#7fba00"/><rect x="6" y="15.500" width="5.500" height="5.500" fill="#00a4ef"/><rect x="12.500" y="15.500" width="5.500" height="5.500" fill="#ffb900"/></svg></span>
        <span class="tapp"><svg class="i24" viewBox="0 0 24 24"><path d="M1 9l11-8 11 8v14H1z" fill="#fff"/><path d="M2 10l17 4-7 8-1-6z" fill="#111"/></svg></span>
        <span class="tapp term"><svg class="i24" viewBox="0 0 24 24"><rect x="1.500" y="1.500" width="21" height="21" fill="#111" stroke="#8a8a8a"/><rect x="2" y="2" width="20" height="3" fill="#444"/><path d="M5 8l3 2-3 2M9 12h4" fill="none" stroke="#ccc"/></svg></span>
        <span class="tapp act"><svg class="i26" viewBox="0 0 24 26"><use href="#vivado"/></svg></span>
      </div>
      <div class="tray">
        <svg class="i12" viewBox="0 0 12 12"><path d="M1 9l5-5 5 5" fill="none" stroke="#fff"/></svg>
        <svg class="i18n" viewBox="0 0 16 18"><rect x="1.500" y="1.500" width="13" height="10" fill="none" stroke="#fff"/><path d="M8 11.500V16M4 16.500h8" stroke="#fff"/><rect x="3" y="0" width="4" height="1.500" fill="#fff"/></svg>
        <svg class="i18n" viewBox="0 0 16 18"><path d="M1 7h2.500L8 3v12l-4.500-4H1z" fill="none" stroke="#fff"/><circle cx="12" cy="13" r="4" fill="#d5122f"/><path d="M10.500 11.500l3 3M13.500 11.500l-3 3" stroke="#fff"/></svg>
        <span class="eng">ENG</span>
        <span class="clock"><span>16:31</span><span>16-12-2022</span></span>
        <svg class="i18 ntf" viewBox="0 0 18 18"><path d="M1.500 1.500h15v12h-5l-3 3v-3h-7z" fill="none" stroke="#fff"/></svg>
      </div>
    </footer>
  </div>
</div>

<div class="activate">
  <div class="act1">Activate Windows</div>
  <div class="act2">Go to Settings to activate Windows.</div>
</div>
<script src="app.js"></script>
</body>
</html>
```

FILE: styles.css
```css
*{box-sizing:border-box}
html,body{margin:0;padding:0}
body{width:1920px;height:1080px;overflow:hidden;position:relative;background:#fafafa;font:12px "Liberation Sans",Arial,sans-serif;color:#222;letter-spacing:.1px}
svg{display:block;flex:none}
.sprite{position:absolute;width:0;height:0}
b{font-weight:700;letter-spacing:0}
em{font-style:normal;color:#8a8a8a}
.grow{flex:1}
.nw{white-space:nowrap}
.blue{color:#2d5289}
.grey{color:#aaa}
.i9{width:9px;height:9px}.i10{width:10px;height:10px}.i12{width:12px;height:12px}.i14{width:14px;height:14px}
.i15{width:15px;height:15px}.i16{width:16px;height:16px}.i18{width:18px;height:18px}.i20{width:20px;height:20px}
.i24{width:24px;height:24px}.i26{width:24px;height:26px}.a14{width:16px;height:12px}.i16w{width:17px;height:17px}.i18n{width:16px;height:18px}
.q{font:700 14px "Liberation Sans",Arial,sans-serif;color:#a0a0a0;width:12px;text-align:center}

/* gnome bar */
.topbar{height:34px;background:#111;color:#eee;font:18px "Noto Sans",sans-serif;letter-spacing:0;display:grid;grid-template-columns:1fr auto 1fr;align-items:center;padding:0 13px 0 18px}
.top-left{display:flex;gap:38px;align-items:center}
.rem{display:flex;align-items:center;gap:5px}
.top-clock{font-size:17.5px}
.top-right{display:flex;align-items:center;justify-content:flex-end}
.top-right span{margin-left:3px}
.t-a{margin-left:34px}.t-w{margin-left:40px}.t-m{margin-left:15px}.t-b{margin-left:14px}

.titlebar{height:37px;background:#ebebeb;border-bottom:2px solid #c8c8c8;display:flex;align-items:center;position:relative;justify-content:center}
.tb-title{font:700 17.5px "Noto Sans",sans-serif;letter-spacing:0;color:#333}
.tb-btns{position:absolute;right:7px;top:7px;display:flex;gap:11px}
.wbtn{width:22px;height:22px;border-radius:50%;background:#dcdcdc;display:flex;align-items:center;justify-content:center}

.shell{display:flex;height:1009px}
.dock{width:46px;height:100%;background:#fafafa;border-right:2px solid #c4c4c4;display:flex;flex-direction:column;align-items:center;padding-top:10px;gap:11px}
.dk{width:24px;height:24px}
.dk-on{background:#ddd;border-radius:6px;width:36px;height:34px;margin:-5px 0;display:flex;align-items:center;justify-content:center}
.dk-sep{width:36px;height:1px;background:#ddd;margin:1px 0}
.stage{flex:1;min-width:0;display:flex;flex-direction:column;position:relative}

.rtabs{height:38px;background:#fafafa;border-bottom:1px solid #c8c8c8;padding-left:8px}
.rtab{width:203px;height:38px;border-bottom:3px solid #0a6fd8;display:flex;align-items:center;padding:0 0 0 12px;font:17.6px "Noto Sans",sans-serif;letter-spacing:0;color:#444}
.rt-ic{width:16px;height:16px;margin-right:5px}
.rt-x{margin-left:9px}

.vtitle{height:23px;background:#fff;display:flex;align-items:center;padding-left:1px;font-size:12px;letter-spacing:-.14px}
.vlogo{width:16px;height:17px;margin-right:5px}
.vtitle-btns{margin-left:auto;display:flex;gap:33px;padding-right:20px}

.menubar{height:63px;background:linear-gradient(#f3f3f3,#d6d6d6);display:flex;justify-content:space-between;border-bottom:1px solid #a8a8a8}
.menu-left{display:flex;flex-direction:column}
.menu-row{height:32px;display:flex;align-items:center;padding-left:16px}
.menu-items{display:flex;gap:23.2px}
.quick{display:flex;align-items:center;margin-left:16px;padding:0 0 6px 14px;border-left:1px solid #c4c4c4;height:32px;color:#999;gap:2px;position:relative}
.quick::after{content:"";position:absolute;left:15px;bottom:6px;width:138px;height:1px;background:#aaa}
.quick svg{color:#aaa}
.qa-caret{width:0;height:0;border:3px solid transparent;border-top:4px solid #aaa;margin:3px 5px 0 0}
.tools{display:flex;padding-left:7px;height:30px;align-items:center}
.tb{width:35px;height:28px;display:flex;align-items:center;justify-content:center;border-right:1px solid #d4d4d4;position:relative}
.drop::after{content:"";position:absolute;right:3px;bottom:2px;border-left:5px solid transparent;border-bottom:5px solid #444}
.menu-right{display:flex;flex-direction:column;align-items:flex-end;padding-right:10px}
.status{height:32px;display:flex;align-items:center;gap:14px;padding-right:0}
.layout-sel{width:173px;height:27px;margin-top:1px;background:#fff;border:1px solid #ccc;display:flex;align-items:center;padding:0 10px 0 6px;gap:3px}
.ls-t{flex:1}

.workspace{display:flex;height:824px}
.flow{width:380px;border-right:2px solid #bdbdbd;display:flex;flex-direction:column;background:#fff}
.flow-head{height:29px;background:#6b6b6b;color:#fff;display:flex;justify-content:space-between;align-items:center;padding:0 4px 0 9px;font-weight:700;font-size:11.6px;letter-spacing:0}
.flow-btns{display:flex;gap:9px;color:#d8d8d8;align-items:center}
.flow-btns .q{color:#d8d8d8}
.flow-body{flex:1;display:flex;overflow:hidden;min-height:0}
.flow-list{flex:1;overflow:hidden;padding-top:0;min-width:0}
.flow-list>:first-child{margin-top:-18px}
.fi,.fh{display:flex;align-items:center;color:#1a1a2a;white-space:nowrap}
.fi{height:29px;position:relative}
.fi b{font-size:11.7px}
.lv1{padding-left:46px}
.lv2{padding-left:67px}
.lv1 svg,.lv2 svg,.run svg{position:absolute}
.lv2 svg{left:46px}
.tw svg{left:27px}
.run svg{left:26px;top:8px;width:11px;height:13px}
.dim{color:#888}
.fh{height:26px;margin-top:19px;padding:3px 0 0 6px;gap:10px}
.fh b{font-size:11.6px;margin-left:1px}
.fh .reg{margin-left:1px}
.fh.active{background:#c9dcfc;padding-top:2px;margin-right:0}
.vs{display:flex;flex-direction:column;align-items:center;flex:none;background:#fff}
.thumb{display:block;background:#bdbdbd;border-radius:4px;width:8px}
.vs-flow{width:15px;border-left:1px solid #f0f0f0;padding:3px 0 3px}
.vs-flow .thumb{height:395px;margin:125px 0 auto}

.design{flex:1;min-width:0;display:flex;flex-direction:column;background:#fff;padding-top:1px}
.design-head{height:27px;background:#c9dcfc;display:flex;justify-content:space-between;align-items:center;padding:0 11px 0 9px}
.design-head b{font-size:11.6px}
.muted{color:#555}
.dh-b{display:flex;gap:12px;align-items:center}
.dh-b .q{font-size:15px}
.panes{flex:1;display:flex;flex-direction:column;padding:11px 11px 0 12px;gap:14px}
.upper{display:flex;gap:14px;height:506px}
.left-stack{width:360px;display:flex;flex-direction:column;gap:15px}
.panel{border:1px solid #c9c9c9;background:#fff;display:flex;flex-direction:column;min-height:0}
.sources{height:298px;border-bottom-width:2px}
.cellprops{height:193px;border-bottom-width:2px}
.tabs{height:30px;background:#e9e9e9;display:flex;align-items:stretch;flex:none}
.tab{display:flex;align-items:center;font-weight:700;letter-spacing:0;color:#8c8c8c;white-space:nowrap}
.tab.on{background:#fff;color:#111}
.cl{width:9px;height:9px;color:#999;margin-left:21px}
.first{padding-left:7px}
.sources .first{width:70px}
.nl{width:78px;padding-left:6px}
.tab-btns{margin-left:auto;display:flex;gap:8px;align-items:center;padding-right:10px;color:#a8a8a8}
.bar{display:flex;align-items:center;height:32px;flex:none;background:#fff}
.bi{width:35px;height:22px;display:flex;align-items:center;justify-content:center;border-right:1px solid #e2e2e2;padding-right:0}
.sources .bar{padding-left:0}
.gear-end{padding-right:12px}
.scrollbox{display:flex;min-height:0;border-top:3px solid #e9e9e9;overflow:hidden}
.tree-box{height:219px;flex:none}
.tree{flex:1;min-width:0;overflow:hidden}
.netlist{margin-top:-3px}
.tr{height:22px;display:flex;align-items:center;white-space:nowrap;overflow:hidden;font-size:12px}
.tw2{margin-right:5px;color:#555}
.tw-e{width:14px;flex:none}
.ti{margin-right:10px}
.d1{padding-left:30px}.d2{padding-left:50px}.d3{padding-left:72px}.d4{padding-left:94px}.d5{padding-left:116px}
.d1 .ti{margin-right:9px}
.sel{background:#c9dcfc;line-height:22px;flex:1;padding-left:3px;margin-left:-2px}
.vs-tree{width:16px;height:216px;justify-content:space-between;padding:7px 0 2px}
.vs-tree .thumb{height:33px;margin-top:90px;margin-bottom:auto}
.vs-tree svg:first-child{margin-bottom:0}
.hs{height:14px;display:flex;align-items:center;flex:none;background:#fff;position:relative}
.hs-tree{padding-left:4px}
.hthumb{display:block;height:8px;background:#bdbdbd;border-radius:4px}
.hs-tree .hthumb{width:140px;margin-left:54px;margin-right:auto}
.corner{width:16px;height:100%;background:#e4e4e4;margin-left:8px}

.phead{height:29px;background:#e9e9e9;display:flex;align-items:center;padding-left:6px;flex:none}
.phead .tab-btns{padding-right:11px}
.phead b{font-size:12px}
.cp-bar{height:31px;padding:0 3px 0 7px}
.cp-name{margin-left:5px}
.ai{width:35px;height:22px;display:flex;align-items:center;justify-content:center}
.sepl{border-left:1px solid #e2e2e2}
.cp-box{height:89px;flex:none}
.cp-grid{flex:1;min-width:0;display:grid;grid-template-columns:123px 1fr;grid-auto-rows:29px;align-items:center;padding:9px 0 0 15px;overflow:hidden;height:86px;letter-spacing:.2px}
.cp-grid>*{overflow:hidden}
.cp-input{border:1px solid #777;height:20px;display:flex;align-items:center;gap:6px;padding-left:5px;margin-left:-3px;border-right:0}
.vs-cp{width:14px;justify-content:space-between;padding:2px 0}
.vs-cp .thumb{height:33px;margin-top:6px;margin-bottom:auto}
.hs-cp{height:13px;padding-left:4px}
.hs-cp .hthumb{width:88px;margin-left:6px;margin-right:auto}
.cp-tabs{flex:1;border-top:1px dashed #aaa;background:#f5f5f5;display:flex;align-items:center;gap:21.5px;padding:0 0 0 5px;color:#8c8c8c;letter-spacing:.3px}
.cp-on{border:1px solid #ccc;background:#fff;color:#111;padding:3px 7px 3px 5px;margin-right:-8px}

.device{flex:1;min-width:0;border:solid #4a7fd4;border-width:3px 2px;display:flex;flex-direction:column;background:#fff}
.dev-tabs{height:28px;padding-left:0}
.dv{padding:0 6px 0 5px;border-right:1px solid #cfcfcf}
.dev-btns{padding-right:9px}
.dev-bar{height:33px;padding-left:1px;border-bottom:1px solid #ddd}
.di{width:35px;height:22px;display:flex;align-items:center;justify-content:center;border-right:1px solid #e2e2e2;position:relative}
.drop2::after{content:"";position:absolute;right:3px;bottom:0;border-left:5px solid transparent;border-bottom:5px solid #555}
.dg{padding-right:11px}
.dev-mid{height:425px;display:flex;flex:none}
.fabric{width:1078px;height:425px;background:#000;overflow:hidden}
.fabric svg{width:1078px;height:425px}
.fabric text{font:6px "Liberation Sans",Arial,sans-serif;fill:#5d80aa;letter-spacing:0}
.vs-dev{flex:1;padding:0 0 2px;justify-content:flex-start}
.vs-dev .thumb{height:34px;margin:164px 0 auto}
.hs-dev{flex:1;padding-left:4px}
.hs-dev .hthumb{width:112px;margin-left:824px;margin-right:auto}
.corner-dev{width:15px;height:13px;margin-left:3px}

.timing{height:262px;flex:none;border-bottom-width:3px;border-bottom-color:#d4d4d4}
.tm-tabs .first{padding-left:7px}
.tm{padding:0 14px 0 6px;border-right:1px solid #cfcfcf}
.tm-tabs .tm.first{padding-left:7px;padding-right:16px}
.tm-on{padding:0 6px 0 5px}
.tm-on .cl{margin-left:21px}
.tm-btns{padding-right:10px}
.tm-main{height:201px;display:flex;flex:none}
.tm-left{width:292px;display:flex;flex-direction:column;border-right:1px solid #e2e2e2}
.tm-bar{height:32px;padding-left:1px}
.tm-tree-box{flex:1;border-top-width:2px}
.tm-tree{padding-top:1px}
.tr2{height:22px;display:flex;align-items:center;padding-left:38px;white-space:nowrap}
.tr2 em{margin-left:3px}
.tr2.ex{padding-left:10px}
.ti2{margin-right:4px;width:12px}
.tw2{flex:none}
.sel2{background:#c9dcfc;padding:5px 1px;margin-left:-1px;letter-spacing:.4px}
.vs-tm{width:14px;justify-content:space-between;padding:2px 0 0;margin-right:0}
.vs-tm .thumb{height:99px;margin-top:6px;margin-bottom:auto}
.tm-split{width:8px;display:flex;flex-direction:column;align-items:center;padding-top:10px;gap:7px;background:#fff}
.tri-l{border:4px solid transparent;border-right:5px solid #111;border-left:0}
.tri-r{border:4px solid transparent;border-left:5px solid #111;border-right:0}
.tm-right{flex:1;min-width:0;display:flex;flex-direction:column}
.tm-rhead{height:32px;display:flex;align-items:center;padding-left:11px;flex:none}
.tm-rhead b{font-size:11.8px}
.tm-rbody{flex:1;border-top-width:2px}
.summary{flex:1;min-width:0;padding:23px 0 0 15px}
.sum-cols{display:flex;gap:19px}
.scol h4{margin:0;font:700 12px/14px "Liberation Sans",Arial,sans-serif;letter-spacing:0;padding:0 0 2px 2px;border-bottom:1px solid #ccc}
.s1{width:251px}.s2{width:246px}.s3{width:314px}
.kv{display:grid;grid-auto-rows:24px;align-items:center;padding:6px 0 0 22px;white-space:nowrap}
.s1 .kv{grid-template-columns:170px 1fr}
.s2 .kv{grid-template-columns:170px 1fr}
.s3 .kv{grid-template-columns:238px 1fr}
.kv a{color:#1a6fe8}
.allmet{margin:8px 0 0 0;font-weight:700;line-height:14px;letter-spacing:-.03px}
.vs-tm2{width:14px;justify-content:space-between;padding:3px 0;margin-right:2px}
.vs-tm2 .thumb{height:124px;margin-top:6px;margin-bottom:auto}
.tm-foot{flex:1;border-top:1px dashed #aaa;background:#f5f5f5;padding:3px 0 0 4px}
.foot-tab{display:block;width:229px;height:20px;background:#fff;border:1px solid #ccc;line-height:18px;padding-left:7px;color:#111}

.under{height:20px;background:#eee}
.taskbar{height:39px;background:#000;display:flex;align-items:stretch;color:#fff;letter-spacing:0}
.start{width:48px;display:flex;align-items:center;justify-content:center}
.tsearch{width:343px;background:#f0f0f0;border:solid #bbb;border-width:1px 0 1px 1px;display:flex;align-items:center;gap:9px;padding-left:9px;color:#333;font:14px "Noto Sans",sans-serif}
.tapps{display:flex;padding-left:0}
.tapp{width:49px;display:flex;align-items:center;justify-content:center;border-bottom:2px solid transparent;position:relative}
.tview svg{margin-right:4px}
.term::after{content:"";position:absolute;left:4px;right:4px;bottom:-2px;height:2px;background:#7db4e8}
.tapp.act{background:#333;border-bottom-color:#7db4e8;width:48px}
.tray{margin-left:auto;display:flex;align-items:center;padding-right:24px}
.tray svg{margin-right:9px}
.eng{margin-left:0;font-size:11px;font-family:"Noto Sans",sans-serif}
.clock{display:flex;flex-direction:column;align-items:center;margin:0 0 0 10px;font:11.500px/18px "Noto Sans",sans-serif}
.tray .ntf{margin:0 0 0 17px}

.activate{position:absolute;left:1601px;top:950px;color:rgba(110,110,110,.62);font-family:"Noto Sans",sans-serif;letter-spacing:0;pointer-events:none}
.act1{font-size:19px;line-height:24px}
.act2{font-size:14.2px;line-height:22px}
```

FILE: app.js
```js
// Device view: draws the FPGA fabric on its own canvas coordinate system.
(function () {
  var NS_VB = '814 299 1078 425';
  var rows = [282, 330, 377, 426, 473, 520, 568, 616, 664, 710];
  var cols = [822, 869, 974, 1026, 1073, 1125, 1172, 1224, 1330, 1377, 1428, 1533, 1581, 1690, 1738, 1789];
  var mType = { 869: 1, 974: 1, 1224: 1, 1377: 1 };
  var vlines = [857, 906, 910, 1011, 1014, 1062, 1109, 1113, 1161, 1208, 1212, 1261, 1318, 1365, 1413, 1417, 1464, 1521, 1569, 1617, 1678, 1726, 1773, 1778, 1825, 1882];
  // L: left bar, l: left squares, R: right bar, r: right dots, C: centre bar
  var hot = {
    '974-2': 'b', '974-3': 'LC', '974-4': 'C',
    '1330-5': 'lr', '1330-6': 'lR', '1330-7': 'lR', '1330-8': 'tR',
    '1377-5': 'LR', '1377-6': 'LRC', '1377-7': 'Cb', '1377-8': 'LR', '1377-9': 'T',
    '1377-0': 'lR', '1377-1': 'LR', '1377-2': 'lR',
    '1428-3': 'R', '1428-5': 'lr', '1428-6': 'bR', '1428-7': 'r', '1428-8': 'r',
    '1428-1': 'R', '1428-2': 'r', '1330-1': 'b',
    '1533-3': 'lr', '1533-4': 'r', '1533-7': 'lr', '1533-1': 'R', '1533-2': 'T',
    '1581-3': 'lC', '1581-4': 'lR', '1581-6': 'bR', '1581-7': 'lr', '1581-1': 'lr', '1581-2': 'R',
    '1690-3': 'lR', '1690-4': 'lr', '1690-5': 'r', '1690-9': 'r',
    '1738-3': 'r', '1738-4': 'b', '1738-1': 'r',
    '1789-4': 'br', '1789-5': 'br', '1789-6': 'r', '1789-1': 'r'
  };
  var out = [];
  function rect(x, y, w, h, fill, extra) {
    out.push('<rect x="' + x + '" y="' + y + '" width="' + w + '" height="' + h + '" fill="' + fill + '"' + (extra || '') + '/>');
  }
  function box(x, y, w, h) {
    rect(x + 0.5, y + 0.5, w, h, 'none', ' stroke="#8a8a8a"');
  }
  var G = '#7b7b7b', C = '#29c5cf';

  function half(x, y, isM, dotted) {
    if (isM) {
      rect(x + 2, y + 2, 5, 16, G);
    } else {
      rect(x + 3, y + 3, 4, 3, G); rect(x + 3, y + 8, 5, 3, G); rect(x + 3, y + 12, 5, 2, G); rect(x + 3, y + 16, 3, 2, G);
    }
    out.push('<path d="M' + (x + 11) + ' ' + (y + 7) + 'l4 2.500-4 2.500z" fill="' + G + '"/>');
    rect(x + 10, y + 14, 3, 2, G);
    if (dotted) {
      out.push('<path d="M' + (x + 22.5) + ' ' + (y + 2) + 'v16" stroke="' + G + '" stroke-width="3" stroke-dasharray="2 1"/>');
    } else {
      rect(x + 21, y + 2, 3, 16, G);
    }
  }
  function tile(x, y, idx) {
    rect(x + 0.5, y + 0.5, 25, 43, '#1b1b1b', ' stroke="#464646"');
    var m = !!mType[x];
    var even = (idx + x) % 3;
    half(x, y + 1, m, even !== 0);
    half(x, y + 23, m, even !== 1);
    if (idx % 2 === 0 && idx > 0) { rect(x + 6, y + 20, 17, 4, G); }
    else { rect(x + 6, y + 21, 16, 3, 'none', ' stroke="' + G + '"'); rect(x + 13, y + 18, 2, 3, G); }
    var code = hot[x + '-' + idx] || '';
    for (var i = 0; i < code.length; i++) {
      var k = code[i];
      if (k === 'L') { rect(x + 2, y + 25, 4, 17, C); }
      if (k === 'T') { rect(x + 2, y + 2, 4, 10, C); }
      if (k === 'l') { rect(x + 3, y + 3, 4, 3, C); rect(x + 3, y + 8, 4, 3, C); rect(x + 3, y + 26, 4, 3, C); rect(x + 3, y + 31, 4, 3, C); rect(x + 3, y + 36, 4, 3, C); }
      if (k === 'b') { rect(x + 3, y + 37, 4, 4, C); }
      if (k === 't') { rect(x + 3, y + 3, 4, 4, C); }
      if (k === 'R') { rect(x + 21, y + 4, 3, 13, C); rect(x + 21, y + 26, 3, 14, C); }
      if (k === 'r') { rect(x + 21, y + 14, 3, 5, C); rect(x + 21, y + 33, 3, 5, C); }
      if (k === 'C') { rect(x + 6, y + 20, 16, 3, C); }
    }
    if (idx > 0) {
      out.push('<text x="' + (x - 8) + '" y="' + (y + 9) + '" textLength="45">CLE' + (m ? 'M' : 'L') + '_R_X' + (cols.indexOf(x) + 28) + 'Y' + (231 - idx) + '</text>');
    }
  }
  function bram(y) {
    var X = 912;
    rect(X + 0.5, y + 0.5, 49, 113, '#1b1b1b', ' stroke="#1a4a1c"');
    box(X + 4, y + 4, 14, 8);
    out.push('<circle cx="' + (X + 11) + '" cy="' + (y + 8) + '" r="2" fill="none" stroke="#8a8a8a"/>');
    box(X + 4, y + 15, 14, 20); box(X + 8, y + 18, 5, 5); box(X + 8, y + 27, 5, 5);
    box(X + 20, y + 21, 9, 14);
    out.push('<circle cx="' + (X + 24.5) + '" cy="' + (y + 28) + '" r="2.500" fill="none" stroke="#8a8a8a"/>');
    box(X + 31, y + 21, 10, 14); box(X + 34, y + 24, 4, 7);
    box(X + 29, y + 40, 18, 27);
    out.push('<circle cx="' + (X + 38) + '" cy="' + (y + 54) + '" r="5" fill="none" stroke="#8a8a8a"/><path d="M' + (X + 34) + ' ' + (y + 52) + 'l8 3M' + (X + 38) + ' ' + (y + 50) + 'v8" stroke="#8a8a8a"/>');
    box(X + 4, y + 70, 22, 16); box(X + 7, y + 73, 3, 3); box(X + 19, y + 73, 3, 3); box(X + 7, y + 81, 3, 3); box(X + 19, y + 81, 3, 3);
    box(X + 29, y + 88, 18, 18); box(X + 33, y + 91, 4, 5); rect(X + 34, y + 100, 3, 2, '#8a8a8a');
    box(X + 17, y + 94, 5, 10);
  }
  function bigCol(x, inner, w, teal) {
    rect(x, 299, 44, 23, '#1a1a1a');
    rect(x, 334, 44, 226, '#1a1a1a');
    rect(x, 571, 44, 153, '#1a1a1a');
    [[321, 1], [334, 1], [559, 1], [571, 1]].forEach(function (e) { rect(x, e[0], 44, e[1], '#4a1828'); });
    [[290, 28], [338, 107], [450, 107], [577, 106], [687, 108]].forEach(function (b, i) {
      var t = teal && i === 4;
      rect(inner, b[0], w, b[1], t ? '#3a6a6c' : '#2d2d2d', t ? ' stroke="#2cc6d0"' : '');
      if (!t) {
        if (i === 1 || i === 2 || i === 4 || i === 0) { rect(inner + w - 2, b[0], 2, b[1], '#a0a0a0'); rect(inner, b[0], 1, b[1], '#888'); }
        else { out.push('<path d="M' + (inner + w - 1) + ' ' + b[0] + 'v' + b[1] + '" stroke="#bbb" stroke-width="2" stroke-dasharray="2 2"/>'); }
        rect(inner, b[0] + b[1] - 1, w, 1, '#5a2030');
      }
    });
  }

  rows.forEach(function (y) { rect(814, y - 2, 1078, 1, '#00007a'); });
  vlines.forEach(function (x) { rect(x, 299, 1, 425, '#00007a'); });
  rect(1617, 299, 33, 425, '#000');
  rect(1650, 299, 24, 425, '#1a1a1a');
  rect(1649, 299, 1, 425, '#57205c'); rect(1674, 299, 1, 425, '#57205c');
  [214, 331, 448, 571, 688].forEach(bram);
  rect(962, 299, 2, 425, '#e2e2e2');
  bigCol(1265, 1276, 23, false);
  bigCol(1470, 1480, 22, true);
  bigCol(1830, 1841, 22, false);
  rows.forEach(function (y, idx) {
    cols.forEach(function (x) { tile(x, y, idx); });
  });
  // selected cell, shown in white
  rect(1378, 448, 5, 20, '#fff'); rect(1378, 445, 20, 5, '#fff');
  rect(1381, 493, 17, 4, '#fff'); rect(1378, 509, 5, 7, '#fff');

  document.getElementById('fabric').innerHTML =
    '<svg viewBox="' + NS_VB + '" xmlns="http://www.w3.org/2000/svg">' + out.join('') + '</svg>';
})();
```
